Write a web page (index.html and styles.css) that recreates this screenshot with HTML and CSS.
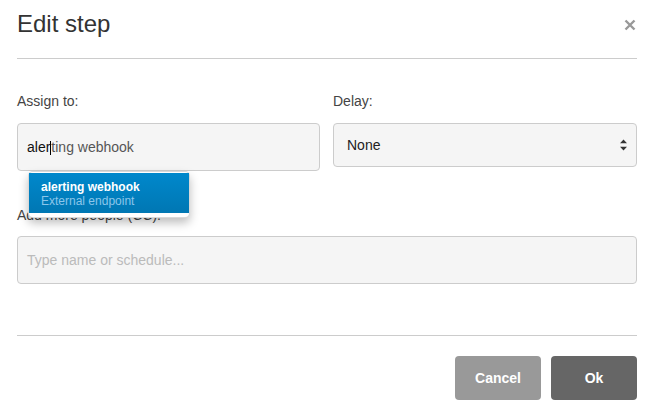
FILE: index.html
```html
<!DOCTYPE html>
<html lang="en">
<head>
<meta charset="utf-8">
<title>Edit step</title>
<link rel="stylesheet" href="styles.css">
</head>
<body>
<div class="modal">
  <div class="modal-header">
    <h3 class="title">Edit step</h3>
    <button class="close" type="button" aria-label="Close">
      <svg width="12" height="12" viewBox="0 0 12 12"><path d="M1.5 1.5 L10.5 10.5 M10.5 1.5 L1.5 10.5" stroke="#999" stroke-width="2.4" stroke-linecap="butt" fill="none"/></svg>
    </button>
  </div>
  <div class="modal-body">
    <div class="row">
      <div class="col">
        <label class="label">Assign to:</label>
        <div class="input-wrap">
          <div class="input"><span class="typed">aler</span><span class="caret"></span><span class="hint">ting webhook</span></div>
          <ul class="typeahead">
            <li class="item active">
              <span class="item-name">alerting webhook</span>
              <span class="item-sub">External endpoint</span>
            </li>
          </ul>
        </div>
      </div>
      <div class="col">
        <label class="label">Delay:</label>
        <div class="select">
          <span>None</span>
          <svg width="7" height="12" viewBox="0 0 7 12"><path d="M0 4.2 L3.5 0.5 L7 4.2 Z M0 7.8 L3.5 11.5 L7 7.8 Z" fill="#333"/></svg>
        </div>
      </div>
    </div>
    <div class="group">
      <label class="label">Add more people (CC):</label>
      <div class="input placeholder">Type name or schedule...</div>
    </div>
  </div>
  <div class="modal-footer">
    <button class="btn btn-cancel" type="button">Cancel</button>
    <button class="btn btn-ok" type="button">Ok</button>
  </div>
</div>
</body>
</html>
```

FILE: styles.css
```css
* { box-sizing: border-box; }

html, body {
  margin: 0;
  padding: 0;
  background: #fff;
}

body {
  font-family: "Liberation Sans", Arial, "Helvetica Neue", sans-serif;
  color: #333;
  font-size: 14px;
  line-height: 20px;
}

.modal {
  width: 620px;
  margin-left: 17px;
}

.modal-header {
  display: flex;
  justify-content: space-between;
  align-items: center;
  padding: 10px 0 20px;
  border-bottom: 1px solid #ccc;
}

.title {
  margin: 0;
  font-size: 24px;
  line-height: 28px;
  font-weight: normal;
  color: #333;
}

.close {
  border: 0;
  background: none;
  padding: 0;
  margin: 2px 1px 0 0;
  width: 12px;
  height: 12px;
  display: flex;
}

.modal-body {
  padding: 32px 0 51px;
}

.row {
  display: grid;
  grid-template-columns: 303px 1fr;
  column-gap: 13px;
  align-items: start;
  margin-bottom: 34px;
}

.label {
  display: block;
  font-size: 14px;
  line-height: 20px;
  color: #444;
  margin-bottom: 12px;
}

.group .label {
  margin-bottom: 11px;
}

.input-wrap {
  position: relative;
}

.input {
  height: 48px;
  display: flex;
  align-items: center;
  padding: 0 9px;
  background: #f5f5f5;
  border: 1px solid #ccc;
  border-radius: 4px;
  font-size: 14px;
  white-space: pre;
}

.typed { color: #111; }
.hint { color: #555; }

.caret {
  display: inline-block;
  width: 1px;
  height: 14px;
  background: #000;
  margin: 1px 0 0;
}

.placeholder {
  color: #bbb;
}

.select {
  height: 44px;
  display: flex;
  align-items: center;
  justify-content: space-between;
  padding: 0 9px 0 13px;
  background: #f5f5f5;
  border: 1px solid #ccc;
  border-radius: 4px;
  font-size: 14px;
  color: #222;
}

.typeahead {
  position: absolute;
  top: 48px;
  left: 11px;
  width: 162px;
  margin: 0;
  padding: 1px 0 4px;
  list-style: none;
  background: #fff;
  border: 1px solid rgba(0, 0, 0, 0.15);
  border-radius: 5px;
  box-shadow: 0 5px 10px rgba(0, 0, 0, 0.25);
  z-index: 10;
}

.item {
  display: flex;
  flex-direction: column;
  padding: 7px 12px 5px;
  font-size: 12px;
  line-height: 14px;
}

.item.active {
  background: linear-gradient(to bottom, #0088cc, #0077b3);
  color: #fff;
}

.item-name {
  font-weight: bold;
}

.item-sub {
  color: #8cc6ea;
}

.modal-footer {
  display: flex;
  justify-content: flex-end;
  gap: 10px;
  padding-top: 20px;
  border-top: 1px solid #ccc;
}

.btn {
  width: 86px;
  height: 44px;
  border: 0;
  border-radius: 4px;
  font-family: inherit;
  font-size: 14px;
  font-weight: bold;
  color: #fff;
  padding: 0;
}

.btn-cancel { background: #999; }
.btn-ok { background: #666; }
```
